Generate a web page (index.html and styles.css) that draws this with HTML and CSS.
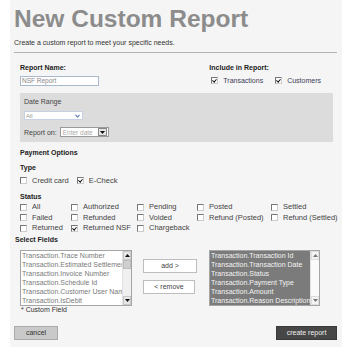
FILE: index.html
```html
<!DOCTYPE html>
<html lang="en">
<head>
    <meta charset="UTF-8">
    <meta name="viewport" content="width=device-width, initial-scale=1.0">
    <title>New Custom Report</title>
    <link rel="stylesheet" href="styles.css">
</head>
<body>

    <div class="page">
        <h1 class="title">New Custom Report</h1>
        <p class="intro">Create a custom report to meet your specific needs.</p>
        <hr class="rule">

        <div class="form">
            <div class="top-row">
                <div class="field">
                    <div class="label">Report Name:</div>
                    <div class="text-input">NSF Report</div>
                </div>
                <div class="include">
                    <div class="label">Include in Report:</div>
                    <div class="check-row">
                        <span class="check"><span class="box checked"></span>Transactions</span>
                        <span class="check"><span class="box checked"></span>Customers</span>
                    </div>
                </div>
            </div>

            <div class="date-box">
                <div class="plain">Date Range</div>
                <div class="select">
                    <span>All</span>
                    <svg class="chevron" width="5" height="4" viewBox="0 0 5 4"><path d="M0.5 0.8 L2.5 3 L4.5 0.8" fill="none" stroke="#6f86b8" stroke-width="1.2"/></svg>
                </div>
                <div class="report-on">
                    <span class="plain">Report on:</span>
                    <div class="date-input">
                        <span>Enter date</span>
                        <span class="date-btn"><svg width="5" height="3" viewBox="0 0 5 3"><path d="M0 0 H5 L2.5 3 Z" fill="#111"/></svg></span>
                    </div>
                </div>
            </div>

            <div class="label section">Payment Options</div>

            <div class="label sub">Type</div>
            <div class="check-row type-row">
                <span class="check"><span class="box"></span>Credit card</span>
                <span class="check"><span class="box checked"></span>E-Check</span>
            </div>

            <div class="label sub status-title">Status</div>
            <div class="status-grid">
                <span class="check"><span class="box"></span>All</span>
                <span class="check"><span class="box"></span>Authorized</span>
                <span class="check"><span class="box"></span>Pending</span>
                <span class="check"><span class="box"></span>Posted</span>
                <span class="check"><span class="box"></span>Settled</span>
                <span class="check"><span class="box"></span>Failed</span>
                <span class="check"><span class="box"></span>Refunded</span>
                <span class="check"><span class="box"></span>Voided</span>
                <span class="check"><span class="box"></span>Refund (Posted)</span>
                <span class="check"><span class="box"></span>Refund (Settled)</span>
                <span class="check"><span class="box"></span>Returned</span>
                <span class="check"><span class="box checked"></span>Returned NSF</span>
                <span class="check"><span class="box"></span>Chargeback</span>
            </div>

            <div class="label fields-title">Select Fields</div>
            <div class="fields-row">
                <div class="listbox">
                    <div class="items">
                        <div>Transaction.Trace Number</div>
                        <div>Transaction.Estimated Settlement Date</div>
                        <div>Transaction.Invoice Number</div>
                        <div>Transaction.Schedule Id</div>
                        <div>Transaction.Customer User Name</div>
                        <div>Transaction.IsDebit</div>
                    </div>
                    <div class="scrollbar">
                        <span class="arrow"><svg width="5" height="3" viewBox="0 0 5 3"><path d="M0 3 H5 L2.5 0 Z" fill="#111"/></svg></span>
                        <span class="thumb"></span>
                        <span class="track"></span>
                        <span class="arrow"><svg width="5" height="3" viewBox="0 0 5 3"><path d="M0 0 H5 L2.5 3 Z" fill="#111"/></svg></span>
                    </div>
                </div>

                <div class="move-buttons">
                    <button class="move-btn">add &gt;</button>
                    <button class="move-btn remove">&lt; remove</button>
                </div>

                <div class="listbox selected">
                    <div class="items">
                        <div>Transaction.Transaction Id</div>
                        <div>Transaction.Transaction Date</div>
                        <div>Transaction.Status</div>
                        <div>Transaction.Payment Type</div>
                        <div>Transaction.Amount</div>
                        <div>Transaction.Reason Description</div>
                    </div>
                    <div class="scrollbar">
                        <span class="arrow"><svg width="5" height="3" viewBox="0 0 5 3"><path d="M0 3 H5 L2.5 0 Z" fill="#777"/></svg></span>
                        <span class="track"></span>
                        <span class="arrow"><svg width="5" height="3" viewBox="0 0 5 3"><path d="M0 0 H5 L2.5 3 Z" fill="#777"/></svg></span>
                    </div>
                </div>
            </div>
            <p class="note">* Custom Field</p>
        </div>

        <div class="actions">
            <button class="btn cancel">cancel</button>
            <button class="btn create">create report</button>
        </div>
    </div>

</body>
</html>
```

FILE: styles.css
```css
body {
    margin: 0;
    background: #fff;
    font-family: "Liberation Sans", Arial, sans-serif;
    color: #333;
}

.page {
    margin-left: 10px;
    width: 328px;
    padding: 6px 0 7px 4px;
    background: #f5f5f5;
}

.title {
    margin: 0;
    font-size: 24.5px;
    line-height: 26px;
    font-weight: bold;
    color: #8c8c8c;
}

.intro {
    margin: 6px 0 0;
    font-size: 7px;
    line-height: 9px;
    color: #333;
}

.rule {
    margin: 5px 5px 0 0;
    border: 0;
    border-top: 1px solid #b4b4b4;
    height: 0;
}

.form {
    padding: 10px 9px 0 6px;
}

/* Etiquetas */
.label {
    font-size: 7px;
    line-height: 9px;
    font-weight: bold;
    color: #222;
}

.plain {
    font-size: 7px;
    line-height: 9px;
    color: #444;
}

.top-row {
    display: flex;
    justify-content: space-between;
    padding-right: 12px;
}

.text-input {
    margin-top: 4px;
    width: 76px;
    height: 8px;
    border: 1px solid #a9b9cc;
    background: #fff;
    font-size: 6.5px;
    line-height: 8px;
    padding-left: 1px;
    color: #888;
}

.include .check-row {
    margin-top: 3px;
    gap: 12px;
    padding-left: 2px;
}

.include .check {
    font-size: 7px;
    color: #3c3c58;
}

/* Casillas */
.check-row {
    display: flex;
}

.check {
    display: flex;
    align-items: center;
    font-size: 7.5px;
    line-height: 11px;
    color: #444;
    white-space: nowrap;
}

.box {
    position: relative;
    width: 5px;
    height: 5px;
    margin-right: 5px;
    background: #fff;
    border: 1px solid #777;
    border-right-color: #ccc;
    border-bottom-color: #ccc;
}

.box.checked::after {
    content: "";
    position: absolute;
    left: 1px;
    top: 0;
    width: 1.5px;
    height: 3px;
    border: solid #111;
    border-width: 0 1.2px 1.2px 0;
    transform: rotate(40deg);
}

/* Rango de fechas */
.date-box {
    margin-top: 7px;
    height: 41px;
    padding: 4px 4px 4px 4px;
    background: #dcdcdc;
}

.select {
    display: flex;
    align-items: center;
    justify-content: space-between;
    margin-top: 5px;
    width: 54px;
    height: 7px;
    padding: 0 2px 0 1px;
    border: 1px solid #c5d2e2;
    background: #fff;
    font-size: 6px;
    color: #999;
}

.report-on {
    display: flex;
    align-items: center;
    gap: 3px;
    margin-top: 7px;
}

.date-input {
    display: flex;
    align-items: center;
    justify-content: space-between;
    width: 45px;
    height: 8px;
    border: 1px solid #999;
    background: #fff;
    font-size: 6.5px;
    color: #aaa;
    padding-left: 2px;
}

.date-btn {
    display: flex;
    align-items: center;
    justify-content: center;
    width: 7px;
    height: 6px;
    margin-right: 1px;
    background: #e4e4e4;
    border: 1px solid #888;
}

.section {
    margin-top: 6px;
}

.sub {
    margin-top: 6px;
}

.type-row {
    margin-top: 3px;
    gap: 8px;
}

.status-title {
    margin-top: 6px;
}

.status-grid {
    display: grid;
    grid-template-columns: 51px 66px 60px 74px auto;
    grid-auto-rows: 10.5px;
    margin-top: 1px;
}

.status-grid .check {
    line-height: 10.5px;
}

.fields-title {
    margin: 1px 0 0 -5px;
}

/* Listas de campos */
.fields-row {
    display: flex;
    align-items: flex-start;
    margin-top: 6px;
}

.listbox {
    display: flex;
    width: 110px;
    height: 54px;
    border: 1px solid #a5a5a5;
    background: #fff;
    overflow: hidden;
}

.items {
    flex: 1;
    overflow: hidden;
    padding-left: 1px;
    font-size: 7px;
    line-height: 9px;
    color: #7a7a7a;
    white-space: nowrap;
}

.listbox.selected {
    width: 109px;
}

.listbox.selected .items {
    background: #7b7b7b;
    color: #f4f4f4;
}

.scrollbar {
    display: flex;
    flex-direction: column;
    width: 8px;
    background: #f0f0f0;
    border-left: 1px solid #e0e0e0;
}

.arrow {
    display: flex;
    align-items: center;
    justify-content: center;
    height: 7px;
    background: #e6e6e6;
    border: 1px solid #c8c8c8;
}

.thumb {
    height: 7px;
    background: #d0d0d0;
    border: 1px solid #bbb;
}

.track {
    flex: 1;
}

.selected .scrollbar {
    background: #fafafa;
}

.selected .arrow {
    background: #f4f4f4;
    border-color: #ddd;
}

.move-buttons {
    display: flex;
    flex-direction: column;
    gap: 7px;
    margin: 9px 12px 0 11px;
}

.move-btn {
    width: 54px;
    height: 14px;
    padding: 0;
    border: 1px solid #bdbdbd;
    background: #fff;
    font-family: inherit;
    font-size: 7px;
    color: #444;
}

.move-btn.remove {
    width: 52px;
}

.note {
    margin: 0;
    font-size: 7px;
    line-height: 8px;
    color: #333;
    padding-left: 1px;
}

/* Botones finales */
.actions {
    display: flex;
    justify-content: space-between;
    margin: 12px 5px 0 0;
}

.btn {
    height: 14px;
    padding: 0;
    border: 1px solid #aaa;
    font-family: inherit;
    font-size: 7px;
}

.cancel {
    width: 44px;
    background: #c9c9c9;
    color: #333;
}

.create {
    width: 61px;
    background: #474747;
    border-color: #3a3a3a;
    color: #eee;
}
```
